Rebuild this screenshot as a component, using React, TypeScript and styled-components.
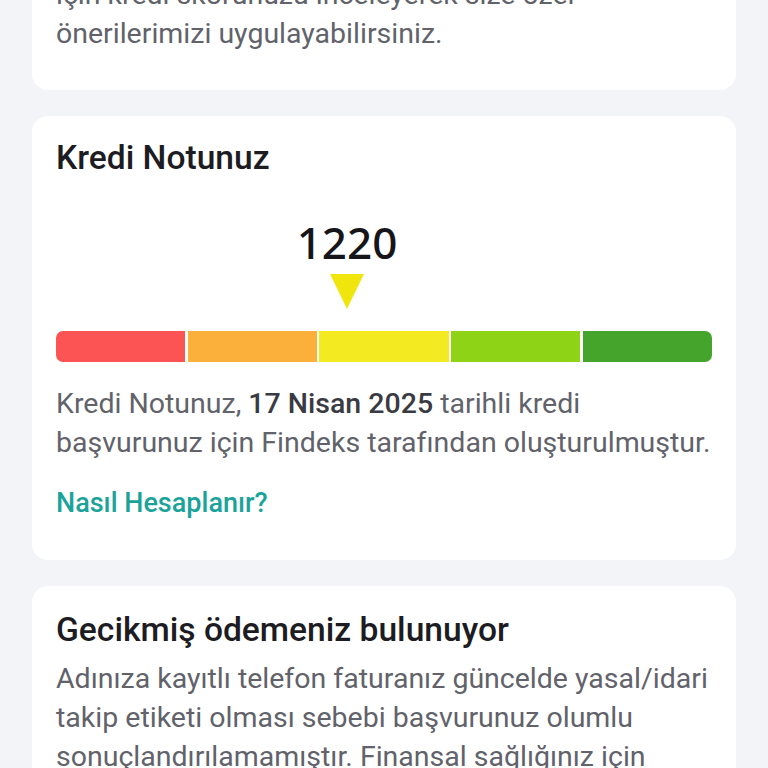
import styled, { createGlobalStyle } from "styled-components";

const GlobalStyle = createGlobalStyle`
  html, body {
    margin: 0;
    padding: 0;
    background: #f3f4f8;
    height: 768px;
    overflow: hidden;
  }
  * {
    box-sizing: border-box;
  }
`;

const Page = styled.div`
  width: 768px;
  padding: 0 32px;
  margin-top: -86px;
  display: flex;
  flex-direction: column;
  gap: 26px;
  font-family: Roboto, "Noto Sans", sans-serif;
`;

const Card = styled.div`
  background: #ffffff;
  border-radius: 16px;
  padding: 22px 24px 37px;
`;

const Title = styled.div`
  font-size: 33.6px;
  font-weight: 500;
  color: #1c1c22;
  line-height: 40px;
`;

const Text = styled.p`
  margin: 0;
  font-size: 28.5px;
  line-height: 39px;
  color: #61626a;

  b {
    font-weight: 500;
    color: #3a3b42;
  }
`;

const ScoreWrap = styled.div`
  display: flex;
  flex-direction: column;
  align-items: center;
  width: 582px;
  margin-top: 38px;
`;

const Score = styled.div`
  font-family: "Noto Sans", Roboto, sans-serif;
  font-size: 44px;
  font-weight: 500;
  color: #16161a;
  line-height: 52px;
`;

const Pointer = styled.div`
  width: 0;
  height: 0;
  margin-top: 6px;
  border-left: 17px solid transparent;
  border-right: 17px solid transparent;
  border-top: 35px solid #f0e60e;
`;

const Bar = styled.div`
  display: flex;
  gap: 2.5px;
  height: 31px;
  margin-top: 22px;
  margin-bottom: 21.5px;
`;

const Segment = styled.div<{ color: string; edge?: "left" | "right" }>`
  flex: 1;
  background: ${({ color }) => color};
  border-radius: ${({ edge }) =>
    edge === "left" ? "7px 0 0 7px" : edge === "right" ? "0 7px 7px 0" : "0"};
`;

const Link = styled.a`
  display: block;
  margin-top: 21.5px;
  font-size: 27px;
  font-weight: 500;
  color: #1ba39a;
  line-height: 40px;
  text-decoration: none;
`;

const DelayTitle = styled(Title)`
  margin-top: 2px;
  margin-bottom: 9px;
`;

const segments = ["#fc5454", "#fbb03b", "#f3ea22", "#8ed316", "#44a42c"];

export default function App() {
  return (
    <>
      <GlobalStyle />
      <Page>
        <Card>
          <Text>
            Kredi başvurunuzun olumlu sonuçlanması
            <br />
            için kredi skorunuzu inceleyerek size özel
            <br />
            önerilerimizi uygulayabilirsiniz.
          </Text>
        </Card>
        <Card>
          <Title>Kredi Notunuz</Title>
          <ScoreWrap>
            <Score>1220</Score>
            <Pointer />
          </ScoreWrap>
          <Bar>
            {segments.map((c, i) => (
              <Segment
                key={c}
                color={c}
                edge={i === 0 ? "left" : i === segments.length - 1 ? "right" : undefined}
              />
            ))}
          </Bar>
          <Text>
            Kredi Notunuz, <b>17 Nisan 2025</b> tarihli kredi başvurunuz için Findeks
            tarafından oluşturulmuştur.
          </Text>
          <Link href="#">Nasıl Hesaplanır?</Link>
        </Card>
        <Card>
          <DelayTitle>Gecikmiş ödemeniz bulunuyor</DelayTitle>
          <Text>
            Adınıza kayıtlı telefon faturanız güncelde yasal/idari takip etiketi olması
            sebebi başvurunuz olumlu sonuçlandırılamamıştır. Finansal sağlığınız için
            önerilerimizi inceleyebilirsiniz.
          </Text>
        </Card>
      </Page>
    </>
  );
}
